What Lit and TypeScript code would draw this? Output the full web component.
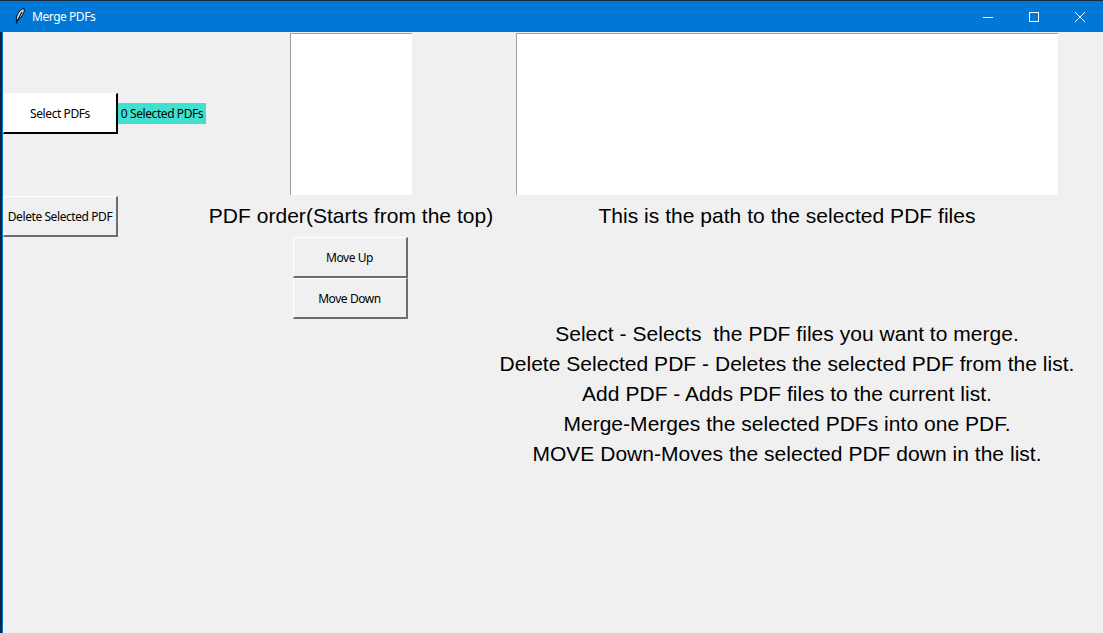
import { LitElement, html, css } from "lit";
import { customElement } from "lit/decorators.js";

const LINES = [
  "Select - Selects  the PDF files you want to merge.",
  "Delete Selected PDF - Deletes the selected PDF from the list.",
  "Add PDF - Adds PDF files to the current list.",
  "Merge-Merges the selected PDFs into one PDF.",
  "MOVE Down-Moves the selected PDF down in the list.",
];

@customElement("app-root")
export class AppRoot extends LitElement {
  static styles = css`
    :host {
      display: flex;
      flex-direction: column;
      width: 1103px;
      height: 633px;
      overflow: hidden;
      background: #f0f0f0;
      color: #000;
      font-family: "Noto Sans", sans-serif;
    }
    .titlebar {
      flex: none;
      height: 32px;
      box-sizing: border-box;
      border-top: 1px solid #1a2a3a;
      background: #0078d7;
      color: #fff;
      display: flex;
      align-items: center;
      font-size: 12px;
      letter-spacing: -0.45px;
    }
    .feather { width: 18px; height: 18px; margin-left: 10px; margin-right: 4px; flex: none; margin-top: -1px; }
    .title { flex: 1; }
    .win { width: 46px; height: 31px; display: flex; align-items: center; justify-content: center; flex: none; }
    .win svg { width: 12px; height: 12px; display: block; }
    .body { flex: 1; display: flex; min-height: 0; }
    .edge { width: 3px; flex: none; background: linear-gradient(90deg, #10243a 0, #10243a 2px, #0078d7 2px); }
    .grid {
      flex: 1;
      padding-top: 1px;
      display: grid;
      grid-template-columns: 115px 88px 290px 582px;
      grid-template-rows: 162px 1px 41px 41px 41px 150px;
      align-content: start;
    }
    button {
      font: 12px "Noto Sans", sans-serif;
      letter-spacing: -0.42px;
      color: #000;
      background: #f0f0f0;
      box-sizing: border-box;
      padding: 0;
      margin: 0;
      white-space: nowrap;
      border-style: solid;
      border-width: 1px 2px 2px 1px;
      border-color: #fff #6d6d6d #6d6d6d #fff;
    }
    .select { grid-column: 1; grid-row: 1; align-self: center; margin-bottom: 2px; padding-top: 2px; height: 41px; width: 115px; background: #fff; border-color: #fff #000 #000 #fff; }
    .count { grid-column: 2; grid-row: 1; align-self: center; margin-bottom: 2px; height: 21px; background: #40e0d0; font-size: 12px; letter-spacing: -0.42px; display: flex; align-items: center; justify-content: center; white-space: nowrap; }
    .delete { grid-column: 1; grid-row: 3; width: 115px; }
    .list { background: #fff; border-top: 1px solid #a0a0a0; border-left: 1px solid #a0a0a0; box-sizing: border-box; justify-self: center; grid-row: 1; }
    .order { grid-column: 3; width: 122px; }
    .paths { grid-column: 4; width: 542px; }
    .big { font: 21px "Liberation Sans", Arial, sans-serif; letter-spacing: 0.03px; white-space: pre; display: flex; align-items: center; justify-content: center; }
    .l-order { grid-column: 3; grid-row: 3; padding-bottom: 2px; }
    .l-path { grid-column: 4; grid-row: 3; padding-bottom: 2px; }
    .up { grid-column: 3; grid-row: 4; width: 115px; justify-self: center; margin-right: 2px; }
    .down { grid-column: 3; grid-row: 5; width: 115px; justify-self: center; margin-right: 2px; }
    .help { grid-column: 4; grid-row: 6; display: grid; grid-auto-rows: 30px; }
  `;

  render() {
    return html`
      <div class="titlebar">
        <svg class="feather" viewBox="0 0 18 18">
          <path d="M14 1.5C10.5 2.5 7 6.5 6.3 11.5L6.8 13.5C10 12.5 13 8.5 14.3 3.5Z" fill="#cfe4f7" stroke="#000" stroke-width="1"/>
          <path d="M12 5 6 16.5" stroke="#000" stroke-width="1.1" fill="none"/>
        </svg>
        <span class="title">Merge PDFs</span>
        <div class="win"><svg viewBox="0 0 12 12"><path d="M1 6.5H11" stroke="#fff" fill="none"/></svg></div>
        <div class="win"><svg viewBox="0 0 12 12"><rect x="1.5" y="1.5" width="9" height="9" stroke="#fff" fill="none"/></svg></div>
        <div class="win"><svg viewBox="0 0 12 12"><path d="M1 1 11 11M11 1 1 11" stroke="#fff" fill="none"/></svg></div>
      </div>
      <div class="body">
        <div class="edge"></div>
        <div class="grid">
          <button class="select">Select PDFs</button>
          <div class="count">0 Selected PDFs</div>
          <div class="list order"></div>
          <div class="list paths"></div>
          <button class="delete">Delete Selected PDF</button>
          <div class="big l-order">PDF order(Starts from the top)</div>
          <div class="big l-path">This is the path to the selected PDF files</div>
          <button class="up">Move Up</button>
          <button class="down">Move Down</button>
          <div class="help">${LINES.map((l) => html`<div class="big">${l}</div>`)}</div>
        </div>
      </div>
    `;
  }
}
